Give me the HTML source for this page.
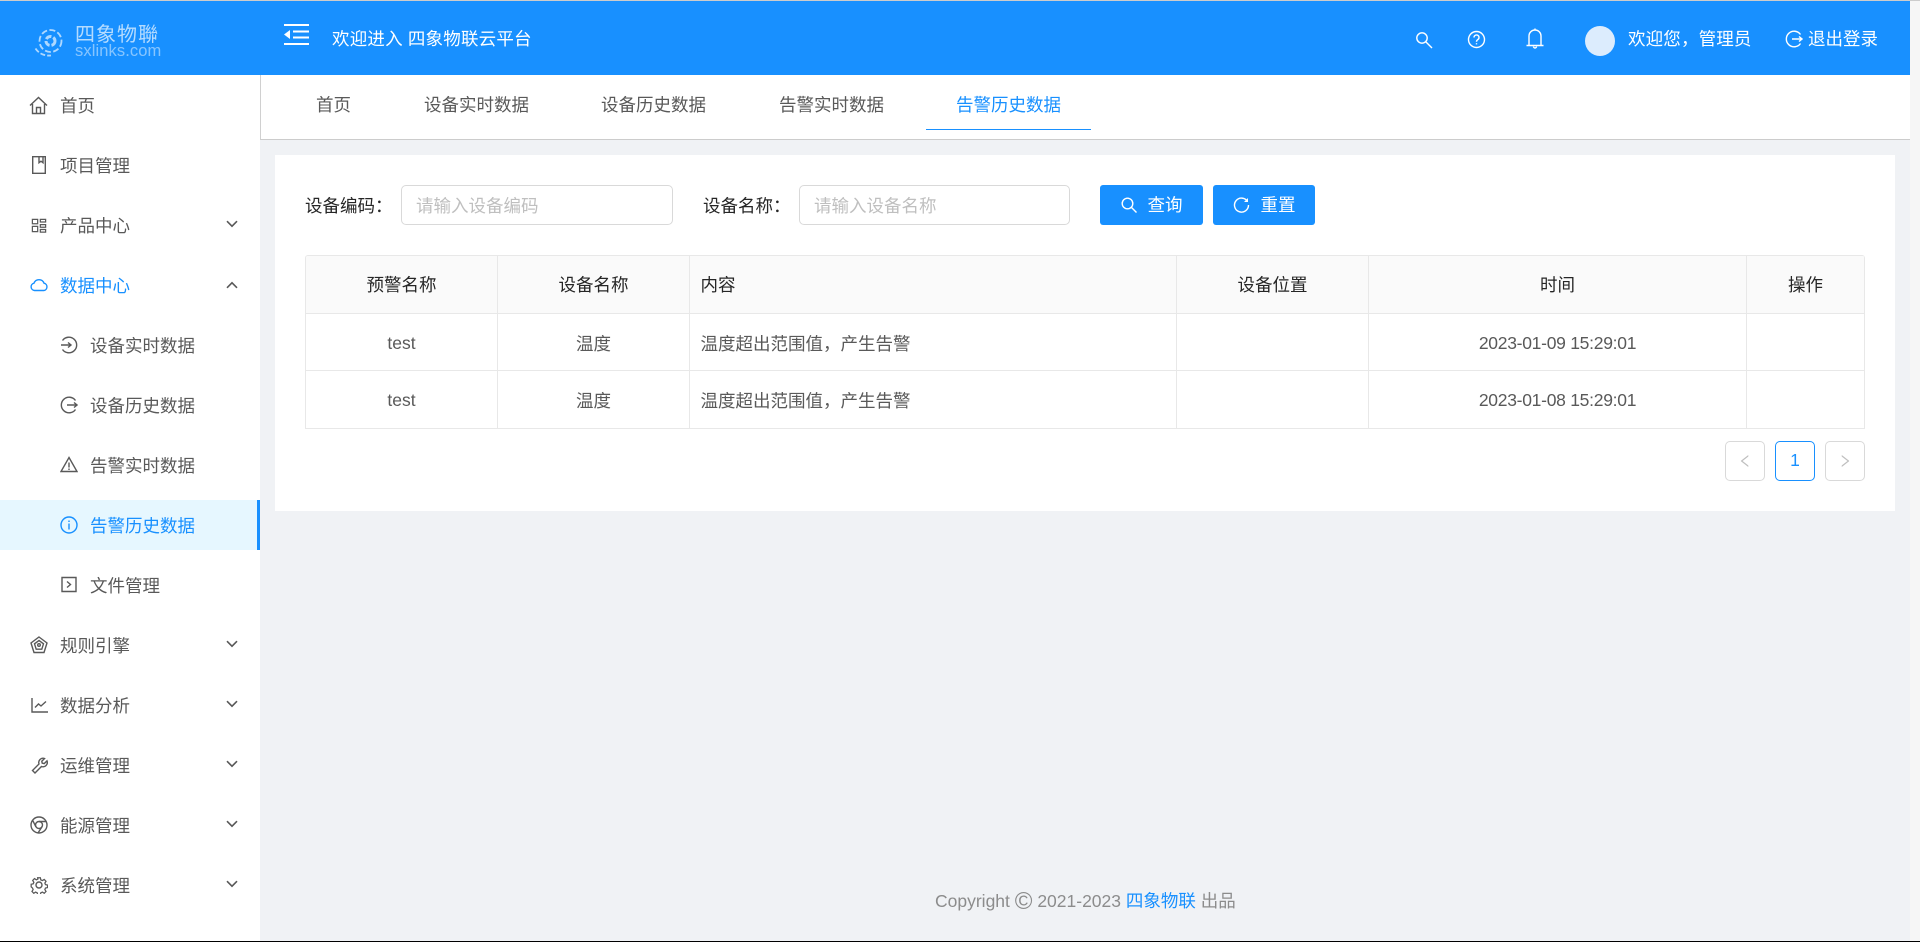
<!DOCTYPE html>
<html lang="zh-CN"><head><meta charset="utf-8"><title>告警历史数据</title>
<style>
*{box-sizing:border-box}
html,body{margin:0;padding:0;width:1920px;height:942px;overflow:hidden;background:#f0f2f5}
body{position:relative;font-family:"Liberation Sans","Noto Sans CJK SC",sans-serif;font-size:17.5px;color:#595959}
.a{position:absolute}
.t{position:absolute;white-space:nowrap;line-height:24px;height:24px}
svg{position:absolute;display:block}
.w{color:#fff}
.b{color:#1890ff}
.ic{fill:none;stroke:#595959;stroke-width:1.4}
.iw{fill:none;stroke:#fff;stroke-width:1.4}
.chev{fill:none;stroke:#595959;stroke-width:1.6}
table{border-collapse:separate;border-spacing:0;table-layout:fixed;width:1560px}
td,th{padding:0 10.5px;border-right:1px solid #e8e8e8;border-bottom:1px solid #e8e8e8;text-align:center;font-weight:400;overflow:hidden;white-space:nowrap}
th{background:#fafafa;color:#262626}
td{color:#595959;padding-top:1px}
tr.r1 td{padding-top:2px}
.l{text-align:left}
.tm{letter-spacing:-.27px}
.inp{position:absolute;top:185px;height:40px;background:#fff;border:1px solid #d9d9d9;border-radius:5px;color:#bfbfbf;line-height:40px;padding-left:14px}
.btn{position:absolute;top:185px;height:40px;background:#1890ff;border-radius:3px}
.pg{position:absolute;top:441px;width:40px;height:40px;border:1px solid #d9d9d9;border-radius:5px;background:#fff}
</style></head><body>
<div class="a" style="left:0;top:0;width:1920px;height:1px;background:#ccc"></div>
<div class="a" style="left:1910px;top:1px;width:10px;height:940px;background:#f6f6f6"></div>
<div class="a" style="left:0;top:1px;width:1910px;height:74px;background:#1890ff"></div>

<!-- logo -->
<svg style="left:34px;top:24px" width="32" height="34" viewBox="0 0 32 34" fill="none" stroke="#fff" stroke-opacity=".65" stroke-width="1.8"><circle cx="16.5" cy="17" r="11" stroke-dasharray="6 2.4"/><path d="M1.5 24.5C5 30 11 32 17 31.5" stroke-dasharray="5 2"/><circle cx="16.5" cy="17" r="4.5" stroke-width="3" stroke-dasharray="6 2"/></svg>
<div class="t" style="left:75px;top:23px;color:rgba(255,255,255,.68);font-size:20px;letter-spacing:1px">四象物聯</div>
<div class="t" style="left:75px;top:39px;color:rgba(255,255,255,.48);font-size:16.500px;letter-spacing:.1px">sxlinks.com</div>

<!-- hamburger -->
<svg style="left:284px;top:24px" width="25" height="21" viewBox="0 0 25 21" fill="#fff"><rect x="0" y="0" width="25" height="2"/><rect x="0" y="19" width="25" height="2"/><rect x="9" y="6.5" width="16" height="2"/><rect x="9" y="12.5" width="16" height="2"/><path d="M0 10.5L6 6v9z"/></svg>
<div class="t w" style="left:332px;top:27px;letter-spacing:.2px">欢迎进入 四象物联云平台</div>

<!-- top right -->
<svg style="left:1415px;top:31px" width="18" height="18" viewBox="0 0 18 18" class="iw"><circle cx="7" cy="7" r="5.2"/><path d="M11 11l6 6"/></svg>
<svg style="left:1467px;top:30px" width="19" height="19" viewBox="0 0 19 19" class="iw"><circle cx="9.5" cy="9.5" r="8"/><path d="M7 7.5a2.5 2.5 0 1 1 3.8 2.1c-.9.6-1.3 1-1.3 2.2"/><path d="M9.5 13.2v1.2"/></svg>
<svg style="left:1526px;top:28px" width="18" height="21" viewBox="0 0 18 21" class="iw"><path d="M0.5 17.5h17M3 17.5V8a6 6 0 0 1 12 0v9.500M9 2V0.500"/><path d="M7.500 18.500a1.500 1.500 0 0 0 3 0"/></svg>
<div class="a" style="left:1585px;top:26px;width:30px;height:30px;border-radius:50%;background:#dcecfd"></div>
<div class="t w" style="left:1628px;top:27px;letter-spacing:.15px">欢迎您，管理员</div>
<svg style="left:1785px;top:30px" width="18" height="18" viewBox="0 0 18 18" class="iw"><path d="M15.500 4.500A7.800 7.800 0 1 0 15.500 13.500"/><path d="M7 9h10M14 6.500L17 9l-3 2.500" /></svg>
<div class="t w" style="left:1808px;top:27px">退出登录</div>

<!-- sidebar -->
<div class="a" style="left:0;top:75px;width:260px;height:866px;background:#fff"></div>
<div class="a" style="left:0;top:500px;width:260px;height:50px;background:#e6f7ff;border-right:3px solid #1890ff"></div>

<svg style="left:29px;top:96px" width="19" height="19" viewBox="0 0 19 19" class="ic"><path d="M1 9.500L9.500 1.500 18 9.500M3.500 8v9.500h12V8M7.500 17.500v-6h4v6"/></svg>
<div class="t" style="left:60px;top:94px">首页</div>
<svg style="left:32px;top:156px" width="14" height="18" viewBox="0 0 14 18" class="ic"><path d="M.7 .7h12.600v16.600H.7zM7 .7v6l2-1.500 2 1.500V.7"/></svg>
<div class="t" style="left:60px;top:154px">项目管理</div>
<svg style="left:31px;top:218px" width="16" height="15" viewBox="0 0 17 17" class="ic"><path d="M1 1.500h6v5H1zM1 9.500h6v6H1zM10 1.500h6v3h-6zM10 7.500h6v3h-6zM10 13h6v3h-6z"/></svg>
<div class="t" style="left:60px;top:214px">产品中心</div>
<svg style="left:30px;top:277px" width="18" height="15" viewBox="0 0 18 15" fill="none" stroke="#1890ff" stroke-width="1.4"><path d="M4.500 13.500a3.700 3.700 0 0 1-.5-7.300A5.300 5.300 0 0 1 14 6.200a3.700 3.700 0 0 1-.3 7.300z"/></svg>
<div class="t b" style="left:60px;top:274px">数据中心</div>

<svg style="left:60px;top:336px" width="18" height="18" viewBox="0 0 18 18" class="ic"><path d="M2.500 4.500A7.800 7.800 0 1 1 2.500 13.500"/><path d="M1 9h10M8 6.500L11 9l-3 2.500"/></svg>
<div class="t" style="left:90px;top:334px">设备实时数据</div>
<svg style="left:60px;top:396px" width="18" height="18" viewBox="0 0 18 18" class="ic"><path d="M15.500 4.500A7.800 7.800 0 1 0 15.500 13.500"/><path d="M7 9h10M14 6.500L17 9l-3 2.500"/></svg>
<div class="t" style="left:90px;top:394px">设备历史数据</div>
<svg style="left:60px;top:456px" width="18" height="17" viewBox="0 0 18 17" class="ic"><path d="M9 1.500L17 15.500H1z"/><path d="M9 6.500v5M9 12.500v1.500"/></svg>
<div class="t" style="left:90px;top:454px">告警实时数据</div>
<svg style="left:60px;top:516px" width="18" height="18" viewBox="0 0 18 18" fill="none" stroke="#1890ff" stroke-width="1.4"><circle cx="9" cy="9" r="8"/><path d="M9 7.500v6M9 4.500v1.500"/></svg>
<div class="t b" style="left:90px;top:514px">告警历史数据</div>
<svg style="left:61px;top:576px" width="16" height="17" viewBox="0 0 16 17" class="ic"><path d="M1 1.500h14v14H1zM6 5.500l3.500 3-3.500 3"/></svg>
<div class="t" style="left:90px;top:574px">文件管理</div>

<svg style="left:30px;top:636px" width="18" height="18" viewBox="0 0 18 18" class="ic"><path d="M9 1L17 7l-3 9.500H4L1 7z"/><path d="M9 4.500l4.500 3.300-1.700 5.400H6.200L4.500 7.800z"/><circle cx="9" cy="9" r="1.300"/></svg>
<div class="t" style="left:60px;top:634px">规则引擎</div>
<svg style="left:31px;top:697px" width="17" height="16" viewBox="0 0 17 16" class="ic"><path d="M1 1v14h16M4 10.500l3.500-3.500 2.500 2L15 4.500"/></svg>
<div class="t" style="left:60px;top:694px">数据分析</div>
<svg style="left:31px;top:757px" width="17" height="17" viewBox="0 0 17 17" class="ic"><path d="M1.500 13.500l6.500-6.500A4.300 4.300 0 0 1 13.500 1.500l-2.700 2.700.4 2 2 .4L16 3.900A4.300 4.300 0 0 1 10.500 9.500L4 16z"/></svg>
<div class="t" style="left:60px;top:754px">运维管理</div>
<svg style="left:30px;top:816px" width="18" height="18" viewBox="0 0 18 18" class="ic"><circle cx="9" cy="9" r="8"/><circle cx="9" cy="9" r="3.500"/><path d="M9 5.500h7.200M5.900 10.800L2.600 4.200M12 10.800L8 17"/></svg>
<div class="t" style="left:60px;top:814px">能源管理</div>
<svg style="left:30px;top:876px" width="18" height="18" viewBox="0 0 18 18" class="ic"><circle cx="9" cy="9" r="3"/><path d="M7.500 1h3l.5 2.300 1.800.8 2-1.300 2 2.100-1.300 2 .7 1.700 2.300.5v2.800l-2.300.5-.7 1.700 1.300 2-2 2.100-2-1.300-1.800.8-.5 2.300h-3l-.5-2.300-1.800-.8-2 1.300-2-2.100 1.300-2-.7-1.700L.3 11V8.200l2.300-.5.7-1.700-1.300-2 2-2.100 2 1.300 1.800-.8z" transform="translate(.9 .9) scale(.9)"/></svg>
<div class="t" style="left:60px;top:874px">系统管理</div>

<!-- chevrons -->
<svg style="left:226px;top:220px" width="12" height="8" viewBox="0 0 12 8" class="chev"><path d="M1 1.200l5 5 5-5"/></svg>
<svg style="left:226px;top:281px" width="12" height="8" viewBox="0 0 12 8" class="chev"><path d="M1 6.800l5-5 5 5"/></svg>
<svg style="left:226px;top:640px" width="12" height="8" viewBox="0 0 12 8" class="chev"><path d="M1 1.200l5 5 5-5"/></svg>
<svg style="left:226px;top:700px" width="12" height="8" viewBox="0 0 12 8" class="chev"><path d="M1 1.200l5 5 5-5"/></svg>
<svg style="left:226px;top:760px" width="12" height="8" viewBox="0 0 12 8" class="chev"><path d="M1 1.200l5 5 5-5"/></svg>
<svg style="left:226px;top:820px" width="12" height="8" viewBox="0 0 12 8" class="chev"><path d="M1 1.200l5 5 5-5"/></svg>
<svg style="left:226px;top:880px" width="12" height="8" viewBox="0 0 12 8" class="chev"><path d="M1 1.200l5 5 5-5"/></svg>

<!-- tabs -->
<div class="a" style="left:260px;top:75px;width:1650px;height:65px;background:#fff;border-left:1px solid #d0d0d0;border-bottom:1px solid #ccc"></div>
<div class="t" style="left:316px;top:93px">首页</div>
<div class="t" style="left:424px;top:93px">设备实时数据</div>
<div class="t" style="left:601px;top:93px">设备历史数据</div>
<div class="t" style="left:779px;top:93px">告警实时数据</div>
<div class="t b" style="left:956px;top:93px">告警历史数据</div>
<div class="a" style="left:926px;top:128.500px;width:165px;height:1px;background:#1890ff"></div>

<!-- panel -->
<div class="a" style="left:275px;top:155px;width:1620px;height:356px;background:#fff"></div>
<div class="t" style="left:305px;top:194px;color:#262626">设备编码：</div>
<div class="inp" style="left:401px;width:272px">请输入设备编码</div>
<div class="t" style="left:703px;top:194px;color:#262626">设备名称：</div>
<div class="inp" style="left:799px;width:271px">请输入设备名称</div>

<div class="btn" style="left:1100px;width:103px"></div>
<svg style="left:1121px;top:197px" width="16" height="16" viewBox="0 0 16 16" fill="none" stroke="#fff" stroke-width="1.400"><circle cx="6.500" cy="6.500" r="5.300"/><path d="M10.300 10.300L15.500 15.500"/></svg>
<div class="t w" style="left:1147.500px;top:193px">查询</div>
<div class="btn" style="left:1213px;width:102px"></div>
<svg style="left:1233px;top:197px" width="17" height="16" viewBox="0 0 17 16" fill="none" stroke="#fff" stroke-width="1.400"><path d="M14.500 4.500A7 7 0 1 0 15.500 8"/><path d="M15 1v4h-4z" fill="#fff" stroke="none"/></svg>
<div class="t w" style="left:1260.500px;top:193px">重置</div>

<!-- table -->
<div class="a" style="left:305px;top:255px;width:1560px;border:1px solid #e8e8e8;border-right:0;border-bottom:0;border-radius:3px 3px 0 0;overflow:hidden">
<table style="width:1559px">
<colgroup><col style="width:192px"><col style="width:192px"><col style="width:487px"><col style="width:192px"><col style="width:378px"><col style="width:118px"></colgroup>
<tr style="height:58px"><th>预警名称</th><th>设备名称</th><th class="l">内容</th><th>设备位置</th><th>时间</th><th>操作</th></tr>
<tr class="r1" style="height:57px"><td>test</td><td>温度</td><td class="l">温度超出范围值，产生告警</td><td></td><td class="tm">2023-01-09 15:29:01</td><td></td></tr>
<tr style="height:58px"><td>test</td><td>温度</td><td class="l">温度超出范围值，产生告警</td><td></td><td class="tm">2023-01-08 15:29:01</td><td></td></tr>
</table></div>

<!-- pagination -->
<div class="pg" style="left:1725px"></div>
<svg style="left:1737px;top:453px" width="16" height="16" viewBox="0 0 1024 1024" fill="#bfbfbf"><path d="M724 218.300V141c0-6.700-7.700-10.400-12.900-6.300L260.300 486.800a31.860 31.860 0 0 0 0 50.300l450.800 352.100c5.300 4.100 12.900.4 12.900-6.300v-77.300c0-4.900-2.300-9.600-6.100-12.600l-360-281 360-281.100c3.800-3 6.100-7.700 6.100-12.600z"/></svg>
<div class="pg" style="left:1775px;border-color:#1890ff;color:#1890ff;text-align:center;line-height:36px">1</div>
<div class="pg" style="left:1825px"></div>
<svg style="left:1837px;top:453px" width="16" height="16" viewBox="0 0 1024 1024" fill="#bfbfbf"><path d="M765.700 486.800L314.900 134.700A7.970 7.970 0 0 0 302 141v77.300c0 4.900 2.300 9.600 6.100 12.600l360 281.100-360 281.100c-3.900 3-6.100 7.700-6.100 12.600V883c0 6.700 7.700 10.400 12.900 6.300l450.800-352.100a31.960 31.960 0 0 0 0-50.400z"/></svg>

<!-- footer -->
<div class="t" style="left:935px;top:889px;color:#8c8c8c">Copyright <span style="font-size:24px;line-height:0;vertical-align:-2px">©</span> 2021-2023 <span class="b">四象物联</span> 出品</div>

<div class="a" style="left:0;top:941px;width:1920px;height:1px;background:#000"></div>
</body></html>
